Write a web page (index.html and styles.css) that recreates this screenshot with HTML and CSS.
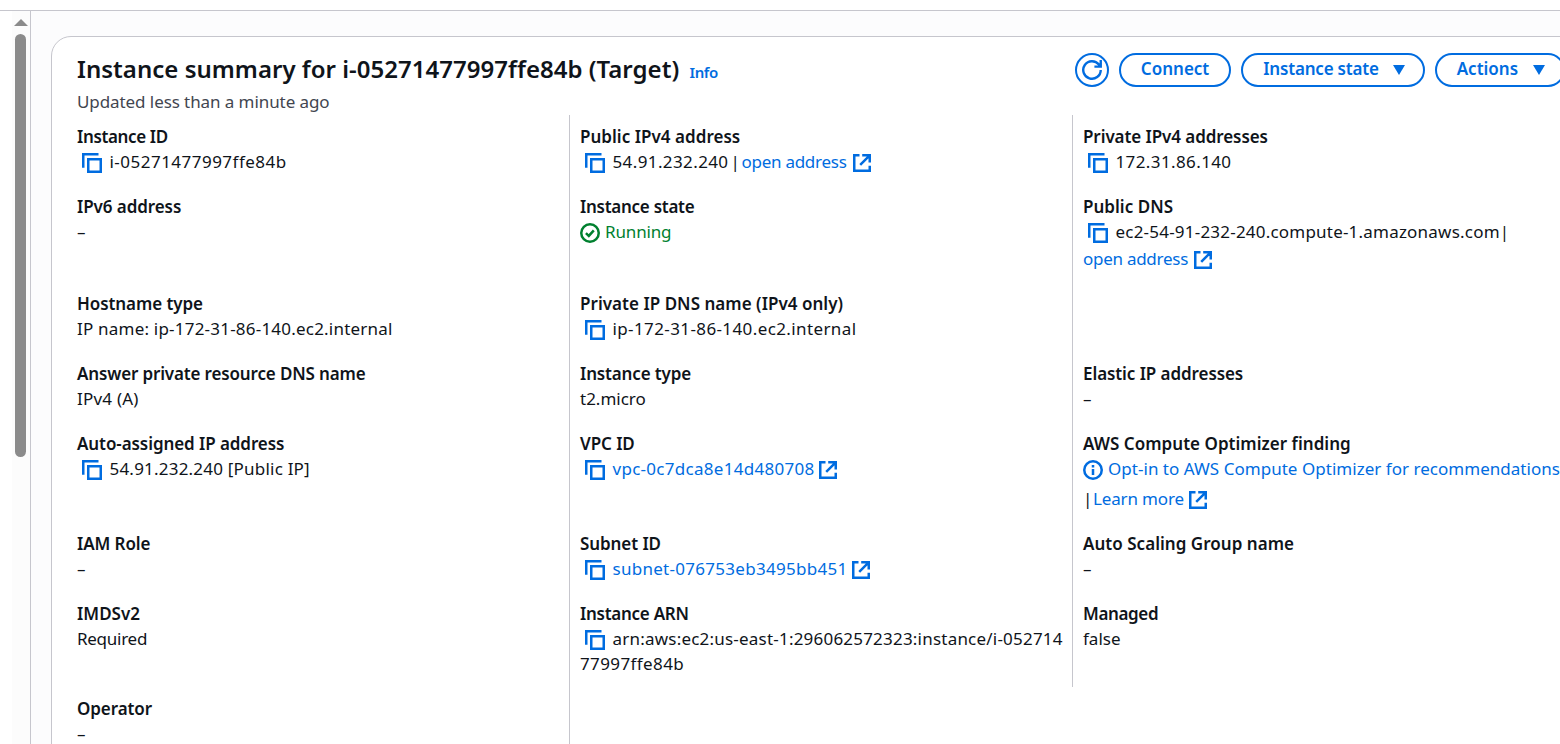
FILE: index.html
```html
<!DOCTYPE html>
<html lang="en">
<head>
<meta charset="utf-8">
<title>Instance summary</title>
<link rel="stylesheet" href="styles.css">
</head>
<body>
<svg class="defs" width="0" height="0" aria-hidden="true">
  <symbol id="copy" viewBox="0 0 20 20"><path d="M1.25 14.7V1.25H16.5M6.25 6.25h12.5v12.5H6.25z"/></symbol>
  <symbol id="external" viewBox="0 0 18 18"><path d="M6.5 1.25H1.25v15.5h15.5v-5M9.2 1.25h7.55V8.6M16.7 1.3L7.2 10.8"/></symbol>
</svg>
<div class="topbar"></div>
<div class="shell">
  <aside class="rail">
    <div class="scroll">
      <div class="scroll-up"></div>
      <div class="thumb"></div>
    </div>
  </aside>
  <main class="main">
    <section class="card">
      <header class="head">
        <div class="titles">
          <h1 class="title">Instance summary for i-05271477997ffe84b (Target) <a class="info">Info</a></h1>
          <p class="sub">Updated less than a minute ago</p>
        </div>
        <div class="actions">
          <button class="btn round" aria-label="Refresh"><svg class="refresh" viewBox="0 0 20 20"><path d="M18.75 10A8.75 8.75 0 1 1 16.9 4.6L18.3 6.4M18.75 0V6.6H12.4"/></svg></button>
          <button class="btn">Connect</button>
          <button class="btn"><span class="state">Instance state</span><i class="caret"></i></button>
          <button class="btn">Actions<i class="caret far"></i></button>
        </div>
      </header>
      <div class="grid">
        <div class="cell"><h3 class="tighter">Instance ID</h3><div class="line"><svg class="copy"><use href="#copy"/></svg><span class="widest">i-05271477997ffe84b</span></div></div>
        <div class="cell"><h3 class="even">Public IPv4 address</h3><div class="line"><svg class="copy"><use href="#copy"/></svg><span class="wider">54.91.232.240</span><span class="bar">|</span><a class="snug after-bar">open address</a><svg class="ext"><use href="#external"/></svg></div></div>
        <div class="cell"><h3>Private IPv4 addresses</h3><div class="line"><svg class="copy"><use href="#copy"/></svg><span class="wider">172.31.86.140</span></div></div>

        <div class="cell"><h3>IPv6 address</h3><div class="line"><span>–</span></div></div>
        <div class="cell"><h3 class="snug">Instance state</h3><div class="line ok"><svg class="status" viewBox="0 0 20 20"><circle cx="10" cy="10" r="8.75"/><path d="M5.9 10.2l2.9 2.7 5-5.6"/></svg><span class="tight">Running</span></div></div>
        <div class="cell"><h3 class="even">Public DNS</h3><div class="line"><svg class="copy"><use href="#copy"/></svg><span class="wide">ec2-54-91-232-240.compute-1.amazonaws.com</span><span class="bar close">|</span></div><div class="line second"><a class="snug">open address</a><svg class="ext"><use href="#external"/></svg></div></div>

        <div class="cell"><h3>Hostname type</h3><div class="line"><span class="wide">IP name: ip-172-31-86-140.ec2.internal</span></div></div>
        <div class="cell"><h3 class="even">Private IP DNS name (IPv4 only)</h3><div class="line"><svg class="copy"><use href="#copy"/></svg><span class="wider">ip-172-31-86-140.ec2.internal</span></div></div>
        <div class="cell"></div>

        <div class="cell"><h3 class="tight">Answer private resource DNS name</h3><div class="line"><span class="wide">IPv4 (A)</span></div></div>
        <div class="cell"><h3 class="tight">Instance type</h3><div class="line"><span>t2.micro</span></div></div>
        <div class="cell"><h3>Elastic IP addresses</h3><div class="line"><span>–</span></div></div>

        <div class="cell"><h3>Auto-assigned IP address</h3><div class="line"><svg class="copy"><use href="#copy"/></svg><span class="wide">54.91.232.240 [Public IP]</span></div></div>
        <div class="cell"><h3>VPC ID</h3><div class="line"><svg class="copy"><use href="#copy"/></svg><a class="id">vpc-0c7dca8e14d480708</a><svg class="ext near"><use href="#external"/></svg></div></div>
        <div class="cell"><h3 class="even">AWS Compute Optimizer finding</h3><div class="line"><svg class="status blue" viewBox="0 0 20 20"><circle cx="10" cy="10" r="8.75"/><path d="M10 9v6M10 5v2.4"/></svg><a class="even">Opt-in to AWS Compute Optimizer for recommendations</a></div><div class="line third"><span class="bar lead">|</span><a class="tight learn">Learn more</a><svg class="ext near"><use href="#external"/></svg></div></div>

        <div class="cell"><h3>IAM Role</h3><div class="line"><span>–</span></div></div>
        <div class="cell"><h3>Subnet ID</h3><div class="line"><svg class="copy"><use href="#copy"/></svg><a class="id">subnet-076753eb3495bb451</a><svg class="ext near"><use href="#external"/></svg></div></div>
        <div class="cell"><h3 class="even">Auto Scaling Group name</h3><div class="line"><span>–</span></div></div>

        <div class="cell"><h3 class="even">IMDSv2</h3><div class="line"><span class="snug">Required</span></div></div>
        <div class="cell"><h3 class="snug">Instance ARN</h3><div class="line"><svg class="copy"><use href="#copy"/></svg><span class="wide">arn:aws:ec2:us-east-1:296062572323:instance/i-052714</span></div><div class="line"><span class="wider">77997ffe84b</span></div></div>
        <div class="cell"><h3 class="tighter">Managed</h3><div class="line"><span>false</span></div></div>

        <div class="cell"><h3>Operator</h3><div class="line"><span>–</span></div></div>
      </div>
    </section>
  </main>
</div>
</body>
</html>
```

FILE: styles.css
```css
* { box-sizing: border-box; }
body {
  margin: 0;
  height: 744px;
  overflow: hidden;
  background: #fff;
  color: #0f141a;
  font: 17px/25px "Noto Sans", sans-serif;
}
h1, h3, p { margin: 0; }
.defs { display: block; }
.topbar { height: 11px; border-bottom: 1px solid #c6c6cd; }
.shell { display: flex; height: 733px; }

.rail {
  flex: none;
  width: 31px;
  display: flex;
  justify-content: flex-end;
  border-right: 1px solid #c6c6cd;
}
.scroll {
  width: 18px;
  display: flex;
  flex-direction: column;
  align-items: center;
  padding: 8px 1px 0 0;
  background: #fcfcfc;
}
.scroll-up {
  border: 7px solid transparent;
  border-top: 0;
  border-bottom: 7px solid #8b8b8b;
}
.thumb {
  width: 11px;
  height: 423px;
  margin-top: 8px;
  border-radius: 6px;
  background: #8b8b8b;
}

.main { flex: 1; min-width: 0; padding: 25px 0 0 20px; background: #fcfcfd; overflow: hidden; }
.card {
  width: 1530px;
  height: 740px;
  padding: 0 15px;
  border: 1px solid #c6c6cd;
  border-radius: 20px;
  background: #fff;
}
.head { display: flex; height: 78px; padding: 16px 0 0 10px; }
.titles { width: 998px; }
.title { font-size: 24px; line-height: 32px; font-weight: 600; white-space: nowrap; letter-spacing: .02px; }
.info { font-size: 15px; letter-spacing: -.4px; margin-left: 4px; }
.sub { margin-top: 1px; color: #424650; letter-spacing: -.08px; }
.actions { display: flex; gap: 10px; align-items: flex-start; }
.btn {
  flex: none;
  display: flex;
  align-items: center;
  height: 34px;
  padding: 0 20px 2px;
  border: 2px solid #006ce0;
  border-radius: 17px;
  background: #fff;
  color: #006ce0;
  font: 600 17px/23px "Noto Sans", sans-serif;
  padding-bottom: 3px;
}
.round { width: 34px; padding: 0; justify-content: center; }
.refresh { flex: none; width: 20px; height: 20px; fill: none; stroke: #006ce0; stroke-width: 2.4; }
.state { letter-spacing: -.2px; }
.caret {
  margin: 3px -2px 0 14px;
  border: 6.5px solid transparent;
  border-top: 10px solid #006ce0;
  border-bottom: 0;
}
.far { margin-left: 15px; }

.grid {
  display: grid;
  grid-template-columns: repeat(3, 503px);
}
.cell { padding: 10px 0 10px 10px; white-space: nowrap; border-right: 1px solid #c6c6cd; }
.cell:nth-child(3n) { border-right: 0; }
h3 { font-size: 17px; line-height: 23px; padding-bottom: 2px; font-weight: 600; letter-spacing: -.08px; }
.line { display: flex; align-items: center; height: 25px; }
.line > span, .line > a { line-height: 23px; padding-bottom: 2px; }
.second { height: 27px; padding-top: 2px; }
.third { height: 30px; padding-top: 5px; }
a { color: #006ce0; }
.bar { width: 9px; margin-left: 2px; text-align: center; }
.close { margin-left: 0; }
.lead { width: 6px; margin-left: 0; }
.after-bar { margin-left: 2px; }
.learn { margin-left: 4px; }
.ok { color: #00802f; }

.copy, .ext, .status { flex: none; fill: none; stroke: #006ce0; stroke-width: 2.5; }
.copy { width: 20px; height: 20px; margin: 0 7.5px 0 5px; }
.ext { width: 18px; height: 18px; margin-left: 6px; }
.near { margin-left: 5px; }
.status { width: 20px; height: 20px; margin-right: 5px; stroke: currentColor; }
.blue { color: #006ce0; }

.tighter { letter-spacing: -.37px; }
.snug { letter-spacing: -.27px; }
.tight { letter-spacing: -.15px; }
.even { letter-spacing: .03px; }
.wide { letter-spacing: .21px; }
.id { letter-spacing: .28px; }
.wider { letter-spacing: .39px; }
.widest { letter-spacing: .48px; }
```
